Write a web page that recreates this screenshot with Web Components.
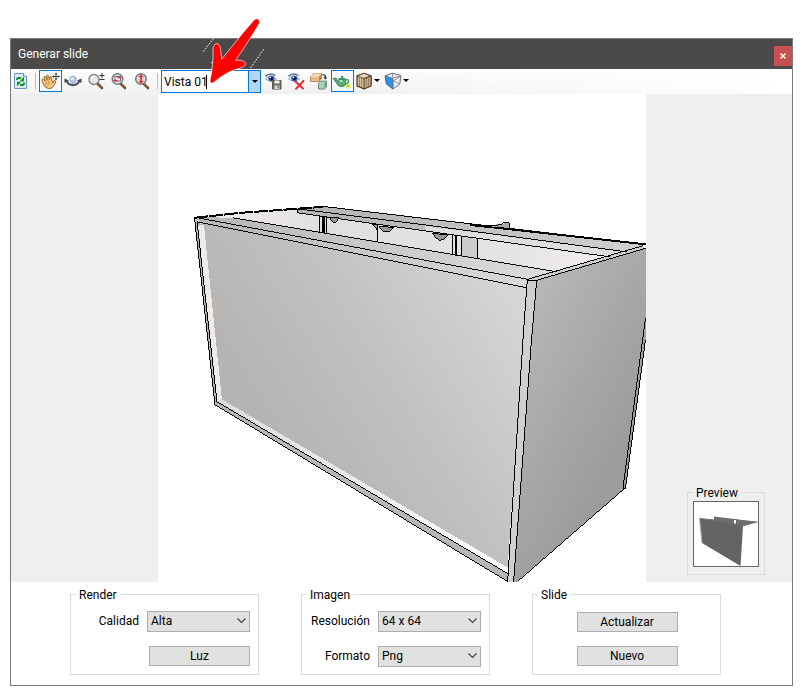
<!DOCTYPE html>
<html lang="es">
<head>
<meta charset="utf-8">
<title>Generar slide</title>
<style>
  body { margin: 0; background: #fff; color: #000; font: 12px/16px Roboto, "Liberation Sans", sans-serif; }
</style>
</head>
<body>
<slide-window></slide-window>
<script>
const define = (name, html, setup) => {
  const tpl = document.createElement('template');
  tpl.innerHTML = html;
  customElements.define(name, class extends HTMLElement {
    constructor() {
      super();
      this.attachShadow({ mode: 'open' }).append(tpl.content.cloneNode(true));
    }
    connectedCallback() { if (setup) setup(this, this.shadowRoot); }
  });
};

const lens = `<path d="M9.5 10.5l4.5 4.5" stroke="#6b4a2c" stroke-width="2.6" stroke-linecap="round"/><path d="M10 10.6l3.6 3.8" stroke="#b08050" stroke-width="1"/>`;
const eye = `<path d="M.5 3.4Q5 -1 10.5 2.6" fill="none" stroke="#5c6f92" stroke-width="1.6"/><path d="M.5 6Q5 1.2 11.5 6Q6 10 .5 6Z" fill="#e8eef8" stroke="#8795b0" stroke-width=".8"/><circle cx="6.3" cy="5.4" r="3" fill="#2d5ba6"/><circle cx="6.5" cy="5.6" r="1.6" fill="#0c1c48"/><circle cx="5.4" cy="4.4" r=".8" fill="#dcecff"/>`;
const icons = {
  refresh: `<path d="M2.5 .5h9l3 3v12h-12z" fill="#dbe9fb" stroke="#7395c8"/><path d="M11.5 .5v3h3" fill="#fff" stroke="#7395c8"/><path d="M5 7V6.300Q5 5 6.500 5h2.500" fill="none" stroke="#009a10" stroke-width="1.800"/><path d="M12 3.800V8.300H7.800z" fill="#009a10"/><path d="M12 9.500v.7Q12 12 10.500 12H8" fill="none" stroke="#009a10" stroke-width="1.800"/><path d="M5 13.300V8.800H9.200z" fill="#009a10"/>`,
  hand: `<g transform="translate(-1 0)"><path d="M1.5 9.5L.9 6.6Q1.5 5.4 2.6 6.5L4 8 2.900 4Q3.300 2.600 4.500 3.700L6.300 7 5.700 2.500Q6.500 1.500 7.500 2.800L8.600 7 9 3.800Q10 3 10.600 4.500L11.500 10 13 7.700Q14.600 7 14.800 8.800L12.500 13.200Q10.500 15.800 7.500 15.700Q3.500 15 1.500 9.500Z" fill="#f0c780" stroke="#9b672d" stroke-width="1"/><path d="M4 8.500l4 3.500M6.400 7l2.600 4M3.500 11l3 2.400" stroke="#c98f40" fill="none"/></g><path d="M14 0v7M10.500 3.500h7M13 1.300l1-1.100 1 1.100M13 5.700l1 1.100 1-1.100M11.700 2.500l-1 1 1 1M16.300 2.500l1 1-1 1" fill="none" stroke="#333" stroke-width=".9"/>`,
  orbit: `<path d="M1.500 7.500Q3 12 8 12T14.500 7.500" fill="none" stroke="#4d5665" stroke-width="2.300"/><path d="M-.5 10V5.500l4.500 2zM16.500 10V5.500l-4.500 2z" fill="#3e4552"/><circle cx="8" cy="6.500" r="3.300" fill="#a9c8ef" stroke="#8aa6cd" stroke-width=".8"/><circle cx="7.300" cy="5.700" r="1.500" fill="#e8f3ff"/>`,
  zoom: `${lens}<circle cx="6" cy="6.500" r="5" fill="#dfe7ea" stroke="#7e868a" stroke-width="1.400"/><path d="M3.200 6Q4 3.200 7 3.300" stroke="#fff" stroke-width="1.500" fill="none"/><path d="M11.500 2.500h5M14 0v5M11.500 6.500h5" stroke="#333"/>`,
  zoomWindow: `${lens}<circle cx="6.500" cy="6" r="5.300" fill="#e0e2e4" stroke="#777b7e" stroke-width="1.500"/><path d="M4 3.500h5.500v4.500H4z" fill="#f3f3f3" stroke="#77737a"/><path d="M2.500 7.500h4M6.500 4.500h4" fill="none" stroke="#e02530" stroke-width="1.300"/>`,
  zoomExtents: `${lens}<circle cx="7" cy="6" r="5.300" fill="#dbd6d8" stroke="#777b7e" stroke-width="1.500"/><path d="M7 3v6" stroke="#ed1c24" stroke-width="1.600"/><path d="M4.700 4L7 1.300 9.300 4zM4.700 8L7 10.700 9.300 8z" fill="#ed1c24"/>`,
  viewSave: `${eye}<path d="M7.500 7.500h8.500v8.500h-8.500z" fill="#6b7063" stroke="#55584e"/><path d="M9.500 7.500h5v3h-5z" fill="#f1f1ec"/><path d="M9.500 12.500h5v3.500h-5z" fill="#d9dad4"/><path d="M13 13v2.500" stroke="#55584e"/>`,
  viewDelete: `${eye}<path d="M7.500 8.500l7.500 7M15.500 7.800L8 15.800" stroke="#e3242b" stroke-width="1.900" stroke-linecap="round"/>`,
  boxes: `<path d="M-.5 4L2.500 .5h8v5L8 8.500H-.5z" fill="#e6bd83" stroke="#a77c45" stroke-width=".8"/><path d="M-.5 4L2.500 .5h8L8 4z" fill="#f7d9ab"/><path d="M8 4v4.500l2.500-3v-5z" fill="#b88648"/><path d="M7.500 10.500l2-2.400H15.500v5.600l-2 2.400h-6z" fill="#a9cdb7" stroke="#517b65" stroke-width=".8"/><path d="M13.500 10.500v5.400l2-2.300V8.100z" fill="#6c9c81"/><path d="M11.500 2q3-1 3 2.500" stroke="#222" fill="none" stroke-width="1.200"/><path d="M12.300 4.200h4l-2 2.300z" fill="#222"/>`,
  teapot: `<g transform="translate(-.5 .5)"><path d="M12 6.500q3.500-1 3 1.500T11.500 11" fill="none" stroke="#3f8c5d" stroke-width="1.300"/><path d="M-.5 5l3-.5L4.500 8 6 5.500h5.500Q14 11 9.800 13H6.500Q4 12 3 9.500z" fill="#55ab76" stroke="#2f7c50" stroke-width=".8"/><path d="M5 5.600Q8.500 3 12 5.600z" fill="#83cba0" stroke="#2f7c50" stroke-width=".7"/><circle cx="8.700" cy="3.300" r="1.100" fill="#338355"/><ellipse cx="7.500" cy="7.500" rx="1.800" ry="1" fill="#b6e5c9"/></g><path d="M14 10v6M11 13h6M12 11l4 4M16 11l-4 4" stroke="#dbe020" stroke-width="1"/><path d="M13.500 12.500h1v1h-1z" fill="#777a10"/>`,
  cube: `<path d="M8 .3L15 3v9.800L8 16l-7-3.200V3z" fill="#dcc39c" stroke="#33271b" stroke-width="1.100"/><path d="M1 3L8 .3 15 3 8 5.500z" fill="#ecd9b9" stroke="#4e3b28" stroke-width=".8"/><path d="M8 5.500V16l7-3.200V3z" fill="#cbac83" stroke="#33271b" stroke-width=".8"/><path d="M3.400 4.200v9M5.700 5v9.200M10.300 5v9.200M12.600 4.200v9" stroke="#806445" stroke-width=".7"/>`,
  shaded: `<path d="M.2 2.700L7.500 .2 15.800 2.500 14.800 11 8 16 1.500 11z" fill="#e9edf0" stroke="#656d75" stroke-width="1"/><path d="M.2 2.900l7.500 2.600.3 10.500L1.500 11z" fill="#2d91e8" stroke="#246ba8" stroke-width=".8"/><path d="M7.700 5.500l8-3M7.600 .5v5M8 15.300V7.500l6.700 3.500M8 8l7.200-4.500M1 3l7 4" fill="none" stroke="#757d85" stroke-width=".8"/>`,
  close: `<path d="M5.500 5.500l5 5M10.500 5.500l-5 5" stroke="#fff" stroke-width="1.400"/>`,
};

define('ui-icon', `<style>
  :host { display: block; width: 16px; height: 16px; flex: none; }
  svg { display: block; overflow: visible; }
</style><svg width="16" height="16" viewBox="0 0 16 16" fill="none" aria-hidden="true"></svg>`,
  (el, root) => { root.querySelector('svg').innerHTML = icons[el.getAttribute('name')] || ''; });

define('tool-button', `<style>
  :host { display: block; flex: none; }
  button { display: flex; align-items: center; justify-content: center; gap: 2px; box-sizing: border-box; width: 23px; height: 22px; padding: 0 2px 1px 0; border: 1px solid transparent; background: none; }
  :host([menu]) button { width: 29px; }
  :host([compact]) { margin-right: 2px; }
  :host([compact]) button { width: 19px; }
  :host([active]) button { border-color: #0078d7; background: #f4f9fe; }
  i { display: none; border: 3px solid transparent; border-top-color: #000; border-bottom: 0; }
  :host([menu]) i { display: block; }
</style><button type="button"><ui-icon></ui-icon><i></i></button>`,
  (el, root) => {
    root.querySelector('ui-icon').setAttribute('name', el.getAttribute('icon'));
    root.querySelector('button').setAttribute('aria-label', el.getAttribute('label'));
  });

// tool-button names its icon after the icon has connected, so draw it then.
const drawIcon = host => {
  const icon = host.shadowRoot.querySelector('ui-icon');
  icon.shadowRoot.querySelector('svg').innerHTML = icons[icon.getAttribute('name')];
};

define('tool-separator', `<style>
  :host { display: block; flex: none; width: 1px; height: 16px; margin: 3px 3px 0; background: #bdbdbd; }
</style>`);

define('view-combo', `<style>
  :host { display: flex; box-sizing: border-box; width: 100px; height: 23px; margin: 0 1px 0 0; border: 1px solid #0078d7; background: #fff; }
  input { flex: 1; min-width: 0; border: 0; outline: 0; padding: 0 2px; font: inherit; color: inherit;
    background: linear-gradient(#000, #000) 44px center / 1px 14px no-repeat #fff; }
  button { display: grid; place-items: center; width: 12px; padding: 0; border: 0; border-left: 1px solid #0078d7; background: #b3d7f3; }
  i { border: 3px solid transparent; border-top-color: #000; border-bottom: 0; }
</style><input type="text" value="Vista 01" aria-label="Vista"><button type="button" aria-label="Abrir lista"><i></i></button>`);

define('group-box', `<style>
  :host { display: block; }
  fieldset { box-sizing: border-box; height: 100%; min-width: 0; margin: 0; padding: 0 8px 7px 5px; border: 1px solid #dcdcdc; }
  legend { padding: 0 3px; line-height: 16px; }
</style><fieldset><legend></legend><slot></slot></fieldset>`,
  (el, root) => { root.querySelector('legend').textContent = el.getAttribute('label'); });

define('push-button', `<style>
  :host { display: block; width: 101px; }
  button { display: block; box-sizing: border-box; width: 100%; height: 20px; padding: 0; border: 1px solid #adadad; background: #e1e1e1; font: inherit; color: inherit; }
</style><button type="button"><slot></slot></button>`);

define('select-field', `<style>
  :host { display: flex; align-items: center; justify-content: flex-end; gap: 8px; }
  span { display: grid; width: 103px; }
  select, svg { grid-area: 1 / 1; }
  select { appearance: none; box-sizing: border-box; width: 100%; height: 21px; margin: 0; padding: 0 3px; border: 1px solid #adadad; border-radius: 0; background: #e1e1e1; font: inherit; color: inherit; }
  svg { place-self: center end; margin-right: 4px; pointer-events: none; }
</style><label for="s"></label><span><select id="s"></select><svg width="9" height="6" viewBox="0 0 9 6"><path d="M.5 .5l4 4 4-4" fill="none" stroke="#444" stroke-width="1.200"/></svg></span>`,
  (el, root) => {
    root.querySelector('label').textContent = el.getAttribute('label');
    root.querySelector('select').add(new Option(el.getAttribute('value')));
  });

define('cabinet-view', `<style>
  :host { display: block; background: #fff; }
  svg { display: block; width: 100%; height: auto; }
  .line { fill: none; stroke: #000; stroke-width: 1; }
</style>
<svg viewBox="158 94 488 488" role="img" aria-label="Vista 3D" shape-rendering="crispEdges">
  <defs>
    <linearGradient id="front" gradientUnits="userSpaceOnUse" x1="250" y1="400" x2="500" y2="240"><stop offset="0" stop-color="#b5b4b2"/><stop offset=".4" stop-color="#c1c0be"/><stop offset="1" stop-color="#d9d8d6"/></linearGradient>
    <linearGradient id="side" gradientUnits="userSpaceOnUse" x1="520" y1="330" x2="650" y2="400"><stop offset="0" stop-color="#b7b6b4"/><stop offset="1" stop-color="#9d9b9b"/></linearGradient>
    <linearGradient id="rim" x1="0" x2="1"><stop offset="0" stop-color="#b7b6b4"/><stop offset="1" stop-color="#dfdddb"/></linearGradient>
    <linearGradient id="inside" x1="0" x2="1"><stop offset="0" stop-color="#f2efee"/><stop offset=".3" stop-color="#e1dfdd"/><stop offset=".7" stop-color="#e6e4e2"/><stop offset="1" stop-color="#f5f2f1"/></linearGradient>
    <linearGradient id="back" x1="0" x2="1"><stop offset="0" stop-color="#b4b3b1"/><stop offset="1" stop-color="#d2d0cf"/></linearGradient>
    <linearGradient id="strip" x1="0" x2="1"><stop offset="0" stop-color="#dddcda"/><stop offset="1" stop-color="#fffefe"/></linearGradient>
  </defs>
  <path d="M195 218L323 207 645 244 528 280z" fill="url(#inside)"/>
  <path d="M298 209L323 206 646 244 627 252 610 257 298 213z" fill="url(#back)"/>
  <path d="M425 226L627 252 610 257 425 231z" fill="#e0dedd"/>
  <path d="M461 237L477 239V258L461 256z" fill="#cecccb"/>
  <path d="M195 217L233 218 557 272 528 280 527 288 202 225z" fill="url(#rim)"/>
  <path d="M202 225L527 288 508 568 221 400z" fill="url(#front)"/>
  <path d="M198 225H204L222 400 217 402z" fill="#eeebe9"/>
  <path d="M194 218L202 225 198 226 217 403 215 405z" fill="#b5b4b2"/>
  <path d="M217 402L221 399 508 568V574z" fill="url(#strip)"/>
  <path d="M215 405L217 402 508 574V582z" fill="#b8b7b5"/>
  <path d="M527 279L537 281 514 582H508z" fill="#d0cfcd"/>
  <path d="M537 281L646 249V340L626 488 518 582H514z" fill="url(#side)"/>
  <path d="M528 279L643 246 646 249 537 281z" fill="#cfcecc"/>
  <path class="line" d="M194.500 217.500L215 405 508 582M197 221L217 402 508 574M233 218L557 272M198 218L528 279.500M197 222L527 288M298 213V209L425 225 627 252M298 213L425 231 610 257M323 206.500L420 218 646 244.500M528 279.500L527 288 523 345 508 582M537 281L531.500 345 514 582M528 279.500L643 246M528 280.500H537L646 248.500M646 318L623.500 488M646 340L626 488 518 582M623 489H626"/>
  <path class="line" stroke-dasharray="14 1" d="M194 218L240 213 323 207" style="stroke-width:2"/>
  <path class="line" d="M470 225L646 244.500" style="stroke-width:2"/>
  <path d="M485 226L509 223V228z" fill="#aaa"/>
  <path class="line" d="M483 226L501 225 504 223H509.500V229M377.500 224V242M461.500 236V256M477.500 238V258"/>
  <path class="line" d="M319.500 216V232M323.500 217V233M326.500 217V233M452.500 235V255M456.500 235V256"/>
  <path d="M322 217h3v16h-3zM455 236h2v20h-2z" fill="#000"/>
  <path class="line" style="fill:#999795" d="M330 218H339L336 222.500H333zM372 224L377.500 230V225zM379 226.500L394 227.500 390 231.500H384zM433 233.500L448 235 444 239.500 440 240.500 436 238z"/>
</svg>`);

define('slide-preview', `<style>
  :host { display: block; box-sizing: border-box; width: 66px; height: 66px; border: 1px solid #666; background: #fff; }
  svg { display: block; width: 100%; height: 100%; }
</style>
<svg viewBox="0 0 64 64" role="img" aria-label="Preview"><path d="M5.500 16L20 17.500V14.500L64 20 49 24 46.500 64 8 41z" fill="#656463"/><path d="M20 15.200L64 19.800 49.500 24 20 19z" fill="#6e6d6c"/><path d="M8 17l12 1.500" stroke="#777"/><path d="M40 18h2v3.500h-2z" fill="#fff"/><path d="M5.500 16L8 41" stroke="#aaa" stroke-width="1"/></svg>`);

// Annotation arrow that points at the view name field.
define('pointer-arrow', `<style>
  :host { display: block; position: absolute; left: 200px; top: 10px; width: 70px; height: 80px; pointer-events: none; }
  svg { display: block; }
</style>
<svg width="70" height="80" viewBox="0 0 210 240" aria-hidden="true">
  <path d="M41 85L9 126M191 118L148 179M42 148L34 160" stroke="#fff" stroke-width="3" stroke-dasharray="5 4"/>
  <path d="M164 28Q177 22 179 38Q155 80 107 151Q130 148 137 160Q135 172 118 175Q80 184 40 218Q30 223 30 210Q41 165 39 112Q44 99 54 101Q61 104 62 122L65 148L92 114L128 70Z" fill="#fe0000" stroke="#fff" stroke-width="2" stroke-linejoin="round"/>
</svg>`);

define('slide-window', `<style>
  :host { display: block; position: relative; padding: 38px 12px 10px 10px; }
  main { border: 1px solid #7a7a7a; background: #fff; }
  header { display: flex; align-items: center; justify-content: space-between; height: 30px; padding-left: 7px; background: #4b4a48; color: #fff; }
  h1 { margin: 0; font: inherit; }
  header button { display: grid; place-items: center; width: 18px; height: 20px; margin-top: 4px; padding: 0; border: 0; background: #c75050; }
  nav { display: flex; box-sizing: border-box; height: 25px; padding-top: 1px; background: linear-gradient(90deg, #fff0 45%, #fff), linear-gradient(#fcfcfc, #f1f1f1); }
  .stage { display: grid; grid-template-columns: 3fr 10fr 3fr; padding-left: 1px; background: #efefef; }
  aside { grid-column: 3; display: flex; align-items: flex-end; justify-content: flex-end; padding: 0 27px 7px 0; }
  aside group-box { width: 78px; }
  cabinet-view { grid-column: 2; }
  form { display: grid; grid-template-columns: repeat(3, 189fr); gap: 42px; padding: 5px 71px 10px 59px; }
  .rows { display: grid; justify-items: end; row-gap: 14px; padding-top: 8px; }
  .rows.center { justify-items: center; padding: 9px 0 0 4px; }
</style>
<main>
  <header><h1>Generar slide</h1><button type="button" aria-label="Cerrar"><ui-icon name="close"></ui-icon></button></header>
  <nav aria-label="Herramientas">
    <tool-button icon="refresh" label="Refrescar" compact></tool-button><tool-separator></tool-separator>
    <tool-button icon="hand" label="Encuadre" active></tool-button>
    <tool-button icon="orbit" label="Orbitar"></tool-button>
    <tool-button icon="zoom" label="Zoom"></tool-button>
    <tool-button icon="zoomWindow" label="Zoom ventana"></tool-button>
    <tool-button icon="zoomExtents" label="Zoom extensión"></tool-button><tool-separator></tool-separator>
    <view-combo></view-combo>
    <tool-button icon="viewSave" label="Guardar vista"></tool-button>
    <tool-button icon="viewDelete" label="Eliminar vista"></tool-button>
    <tool-button icon="boxes" label="Intercambiar"></tool-button>
    <tool-button icon="teapot" label="Render" active></tool-button>
    <tool-button icon="cube" label="Vistas" menu></tool-button>
    <tool-button icon="shaded" label="Estilo visual" menu></tool-button>
  </nav>
  <section class="stage">
    <cabinet-view></cabinet-view>
    <aside><group-box label="Preview"><slide-preview></slide-preview></group-box></aside>
  </section>
  <form>
    <group-box label="Render"><div class="rows"><select-field label="Calidad" value="Alta"></select-field><push-button>Luz</push-button></div></group-box>
    <group-box label="Imagen"><div class="rows"><select-field label="Resolución" value="64 x 64"></select-field><select-field label="Formato" value="Png"></select-field></div></group-box>
    <group-box label="Slide"><div class="rows center"><push-button>Actualizar</push-button><push-button>Nuevo</push-button></div></group-box>
  </form>
</main>
<pointer-arrow></pointer-arrow>`,
  (el, root) => root.querySelectorAll('tool-button').forEach(drawIcon));
</script>
</body>
</html>
